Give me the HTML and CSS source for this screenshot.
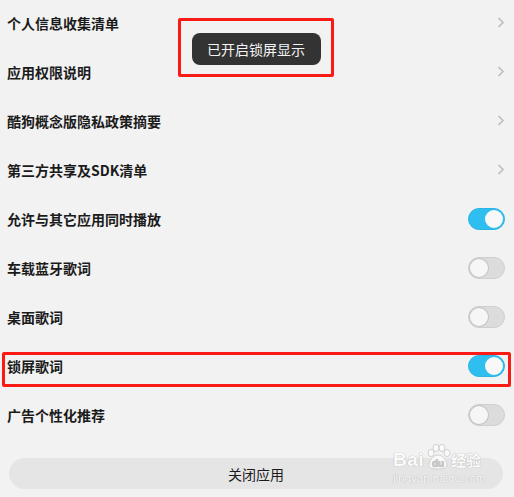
FILE: index.html
```html
<!DOCTYPE html>
<html lang="zh-CN">
<head>
    <meta charset="UTF-8">
    <meta name="viewport" content="width=device-width, initial-scale=1.0">
    <title>设置</title>
    <link rel="stylesheet" href="styles.css">
</head>
<body>
    <div id="page">
        <ul class="list">
            <li class="row">
                <span class="label">个人信息收集清单</span>
                <svg class="arrow" width="8" height="11" viewBox="0 0 8 11"><polyline points="1.5,1 6,5.5 1.5,10" fill="none" stroke="#bdbdbd" stroke-width="1.6"/></svg>
            </li>
            <li class="row">
                <span class="label">应用权限说明</span>
                <svg class="arrow" width="8" height="11" viewBox="0 0 8 11"><polyline points="1.5,1 6,5.5 1.5,10" fill="none" stroke="#bdbdbd" stroke-width="1.6"/></svg>
            </li>
            <li class="row">
                <span class="label">酷狗概念版隐私政策摘要</span>
                <svg class="arrow" width="8" height="11" viewBox="0 0 8 11"><polyline points="1.5,1 6,5.5 1.5,10" fill="none" stroke="#bdbdbd" stroke-width="1.6"/></svg>
            </li>
            <li class="row">
                <span class="label">第三方共享及SDK清单</span>
                <svg class="arrow" width="8" height="11" viewBox="0 0 8 11"><polyline points="1.5,1 6,5.5 1.5,10" fill="none" stroke="#bdbdbd" stroke-width="1.6"/></svg>
            </li>
            <li class="row">
                <span class="label">允许与其它应用同时播放</span>
                <span class="switch on"><i class="knob"></i></span>
            </li>
            <li class="row">
                <span class="label">车载蓝牙歌词</span>
                <span class="switch"><i class="knob"></i></span>
            </li>
            <li class="row">
                <span class="label">桌面歌词</span>
                <span class="switch"><i class="knob"></i></span>
            </li>
            <li class="row marked">
                <span class="label">锁屏歌词</span>
                <span class="switch on"><i class="knob"></i></span>
                <div class="mark-row"></div>
            </li>
            <li class="row">
                <span class="label">广告个性化推荐</span>
                <span class="switch"><i class="knob"></i></span>
            </li>
        </ul>

        <button class="close-btn">关闭应用</button>

        <!-- 토스트 + 빨간 표시 박스 -->
        <div class="mark-toast">
            <div class="toast">已开启锁屏显示</div>
        </div>

        <div class="watermark">
            <div class="wm-top">
                <span class="wm-bai">Bai</span>
                <svg class="wm-paw" width="28" height="26" viewBox="0 0 28 26">
                    <g fill="#fafafa" stroke="#d0d0d0" stroke-width="1">
                        <ellipse cx="7" cy="9" rx="3" ry="3.6"/>
                        <ellipse cx="12" cy="4" rx="3" ry="3.6"/>
                        <ellipse cx="18" cy="4" rx="3" ry="3.6"/>
                        <ellipse cx="23" cy="9" rx="3" ry="3.6"/>
                        <path d="M14 11 C9 11 5 17 5 21 C5 24 8 25 14 25 C20 25 23 24 23 21 C23 17 19 11 14 11 Z"/>
                    </g>
                    <text x="14" y="23" text-anchor="middle" class="wm-du">du</text>
                </svg>
                <span class="wm-jy">经验</span>
            </div>
            <div class="wm-url">jingyan.baidu.com</div>
        </div>
    </div>
</body>
</html>
```

FILE: styles.css
```css
html, body{
    margin: 0;
    padding: 0;
    background: #f2f2f2;
}
#page{
    position: relative;
    width: 514px;
    height: 497px;
    overflow: hidden;
    font-family: "Noto Sans CJK SC", "Noto Sans", sans-serif;
    color: #1b1b1b;
}
.list{
    list-style: none;
    margin: -2px 0 0 0;
    padding: 0;
}
.row{
    position: relative;
    height: 49px;
    display: flex;
    align-items: center;
    justify-content: space-between;
    padding: 0 9px 0 7px;
}
.label{
    font-size: 14px;
    font-weight: bold;
    line-height: 20px;
}
.arrow{
    margin-right: 0;
}
.switch{
    position: relative;
    width: 37px;
    height: 22px;
    border-radius: 11px;
    background: #dcdcdc;
    box-sizing: border-box;
    border: 1px solid #cfcfcf;
    margin-right: 0;
}
.switch .knob{
    position: absolute;
    top: 1px;
    left: 1px;
    width: 18px;
    height: 18px;
    border-radius: 50%;
    background: #f6f6f6;
    box-shadow: 0 0 0 1px #c4c4c4;
}
.switch.on{
    background: #2ebef0;
    border-color: #2cb4e6;
}
.switch.on .knob{
    left: auto;
    right: 1px;
    background: #f8f8f8;
    box-shadow: none;
}
.mark-row{
    position: absolute;
    left: 2px;
    top: 11px;
    width: 509px;
    height: 35px;
    box-sizing: border-box;
    border: 3px solid #fb1b16;
    border-radius: 2px;
}
.close-btn{
    display: block;
    width: 494px;
    height: 31px;
    margin: 19px 0 0 9px;
    border: none;
    border-radius: 16px;
    background: #e5e5e5;
    font-family: "Noto Sans CJK SC", sans-serif;
    font-size: 14px;
    color: #1b1b1b;
    padding: 0;
}
.mark-toast{
    position: absolute;
    left: 178px;
    top: 18px;
    width: 156px;
    height: 59px;
    box-sizing: border-box;
    border: 3px solid #fb1b16;
    border-radius: 2px;
    display: flex;
    justify-content: center;
    padding-top: 12px;
}
.toast{
    width: 129px;
    height: 32px;
    border-radius: 8px;
    background: #333333;
    color: #f4f4f4;
    font-size: 14px;
    line-height: 32px;
    text-align: center;
}
.watermark{
    position: absolute;
    left: 393px;
    top: 442px;
    width: 94px;
    color: #fbfbfb;
    text-shadow: 0 0 1px #b8b8b8, 0 0 1px #b8b8b8;
}
.wm-top{
    display: flex;
    align-items: flex-end;
    height: 28px;
}
.wm-bai{
    font-family: "Liberation Sans", Arial, sans-serif;
    font-weight: bold;
    font-size: 19px;
    line-height: 20px;
    letter-spacing: 0.5px;
}
.wm-paw{
    margin: 0 -1px 0 0;
}
.wm-du{
    font-family: "Liberation Sans", Arial, sans-serif;
    font-weight: bold;
    font-size: 10px;
    fill: #c8c8c8;
}
.wm-jy{
    font-size: 15px;
    line-height: 20px;
    font-weight: bold;
}
.wm-url{
    font-family: "Liberation Sans", Arial, sans-serif;
    font-size: 11.5px;
    line-height: 14px;
    margin-top: 1px;
}
```
